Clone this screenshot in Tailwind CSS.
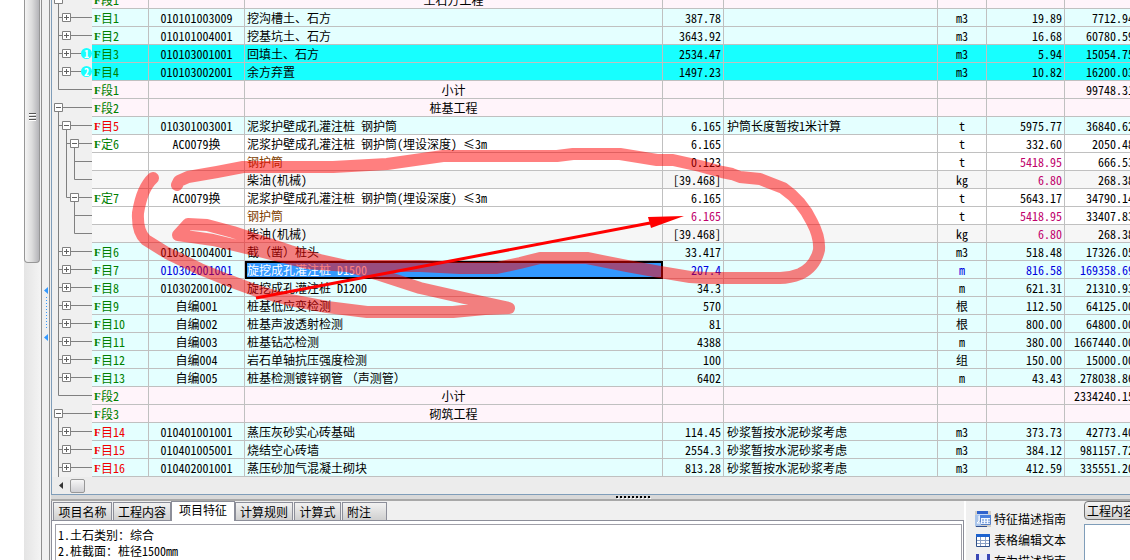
<!DOCTYPE html>
<html lang="zh-CN">
<head>
<meta charset="utf-8">
<title>工程量清单</title>
<script src="https://cdn.jsdelivr.net/npm/@tailwindcss/browser@4"></script>
</head>
<body class="relative flex h-screen overflow-hidden bg-[#f0f0f0] font-['Noto_Sans_CJK_SC',sans-serif] text-xs text-black [font-feature-settings:'hwid']">

<!-- page behind, with its vertical scroll bar -->
<div class="w-6 shrink-0 bg-white"></div>
<div class="w-[17px] shrink-0 bg-linear-to-r from-[#e4e4e4] to-[#f4f4f4]">
  <div class="flex h-[263px] w-4 items-center justify-center rounded-b-sm border border-t-0 border-[#979797] bg-linear-to-r from-[#f4f4f4] via-[#dcdcdc] to-[#b4b4b8]">
    <svg class="mt-[-28px] h-[9px] w-[7px]" viewBox="0 0 7 9"><path d="M0 .5H7M0 3.5H7M0 6.5H7" stroke="#555"/><path d="M0 1.5H7M0 4.5H7M0 7.5H7" stroke="#fff"/></svg>
  </div>
</div>
<!-- vertical splitter -->
<div class="flex w-[9px] shrink-0 items-center justify-center border-x border-[#8f8f8f] bg-[#f0f0f0]">
  <svg class="mt-[68px] h-[54px] w-1" viewBox="0 0 4 54"><path d="M4 0V7L0 3.5ZM4 47V54L0 50.5Z" fill="#3399ff"/><path d="M2.5 10V42" stroke="#3399ff" stroke-dasharray="1 2"/></svg>
</div>

<main class="ml-px flex min-w-0 flex-1 flex-col">
  <section class="flex min-h-0 flex-1 flex-col overflow-hidden border-b border-l border-[#7f9db9]">
    <div class="min-h-0 flex-1 overflow-hidden">
      <table class="mt-[-9px] w-[1086px] table-fixed border-separate border-spacing-0">
        <colgroup><col class="w-10"><col class="w-[57px]"><col class="w-24"><col class="w-[418px]"><col class="w-[61px]"><col class="w-[214px]"><col class="w-[49px]"><col class="w-[78px]"><col class="w-[73px]"></colgroup>
        <tbody id="rows"></tbody>
      </table>
    </div>
    <div class="flex h-[17px] shrink-0 items-center bg-[#ececec]">
      <button aria-label="向左滚动" class="flex h-4 w-[18px] items-center justify-center"><svg class="h-[7px] w-1" viewBox="0 0 4 7"><path d="M4 0V7L0 3.5Z" fill="#333"/></svg></button>
      <div class="h-[14px] w-[15px] rounded-xs border border-[#979797] bg-linear-to-b from-[#f6f6f6] to-[#d0d0d4]"></div>
    </div>
  </section>

  <div class="flex h-[6px] shrink-0 justify-center border-b-2 border-[#a8a8a8] bg-[#d8d8d8] pl-[85px]">
    <svg class="mt-px h-[3px] w-[35px]" viewBox="0 0 35 3"><path d="M0 1H35" stroke="#000" stroke-width="2" stroke-dasharray="2 2"/><path d="M1 2.5H35" stroke="#fff" stroke-dasharray="2 2"/></svg>
  </div>

  <section class="flex h-[59px] shrink-0 overflow-hidden border-l border-[#8c8e99]">
    <div class="flex min-w-0 flex-1 flex-col">
      <div role="tablist" class="flex h-5 shrink-0 items-end gap-px border-b border-[#8c8e99] pl-px">
        <button role="tab" class="h-[18px] w-[59px] border border-b-0 border-[#8c8e99] bg-linear-to-b from-[#f2f2f2] to-[#cfcfcf] leading-[17px]">项目名称</button>
        <button role="tab" class="h-[18px] w-[58px] border border-b-0 border-[#8c8e99] bg-linear-to-b from-[#f2f2f2] to-[#cfcfcf] leading-[17px]">工程内容</button>
        <button role="tab" aria-selected="true" class="-mx-px -mb-px h-5 w-16 border border-b-0 border-[#8c8e99] bg-white pb-[3px] leading-4">项目特征</button>
        <button role="tab" class="h-[18px] w-[58px] border border-b-0 border-[#8c8e99] bg-linear-to-b from-[#f2f2f2] to-[#cfcfcf] leading-[17px]">计算规则</button>
        <button role="tab" class="h-[18px] w-[47px] border border-b-0 border-[#8c8e99] bg-linear-to-b from-[#f2f2f2] to-[#cfcfcf] leading-[17px]">计算式</button>
        <button role="tab" class="h-[18px] w-[45px] border border-b-0 border-[#8c8e99] bg-linear-to-b from-[#f2f2f2] to-[#cfcfcf] pl-1 text-left leading-[17px]">附注</button>
      </div>
      <div class="flex flex-1 border-r border-[#8c8e99] bg-white pt-[3px] pr-px pl-[3px]">
        <textarea aria-label="项目特征" class="h-20 w-full resize-none overflow-hidden border border-[#a0a0a8] bg-white px-[2px] pt-[2px] leading-4 outline-none">1.土石类别：综合
2.桩截面：桩径1500mm</textarea>
      </div>
    </div>
    <div class="flex w-[120px] shrink-0 flex-col gap-[5px] border-l-2 border-white pt-[10px] pl-[9px]">
      <button class="flex h-4 items-center gap-[3px]"><svg class="h-4 w-4" viewBox="0 0 16 16"><path d="M0 0H16V16H0Z" fill="#d4d0c8"/><path d="M2 1H13V9H2Z" fill="#c4d8f6"/><path d="M2 0H13V3H2Z" fill="#2f62cc"/><path d="M5.500 4.500H15.500V13.500H5.500Z" fill="#f4f8ff" stroke="#5b83c8"/><path d="M5 4H16V7H5Z" fill="#4a80de"/><path d="M7 9H9M10 9H12M13 9H15M7 11.500H9M10 11.500H12M13 11.500H15" stroke="#86a9e0" stroke-width="1.500"/><path d="M0 4H4V9L6 12V15H0Z" fill="#a9c4ea"/><path d="M4 5V10L2 12H5" stroke="#fff" fill="none"/><path d="M1 15.500H12" stroke="#31508f"/></svg>特征描述指南</button>
      <button class="flex h-4 items-center gap-[3px]"><svg class="h-4 w-4" viewBox="0 0 16 16"><path d="M1.500 2.500H14.500V14.500H1.500Z" fill="#fff" stroke="#2d4e88"/><path d="M1 2H15V5H1Z" fill="#1d62cf"/><path d="M5.500 5V14M10.500 5V14M2 8.500H14M2 11.500H14" stroke="#8aa0c4"/></svg>表格编辑文本</button>
      <button class="flex h-4 items-center gap-[3px]"><svg class="h-4 w-4" viewBox="0 0 16 16"><path d="M1 1H15V15H1Z" fill="#3947b5"/><path d="M4 1H12V7H4Z" fill="#e8ecfa"/></svg>存为描述指南</button>
    </div>
    <div class="flex w-[46px] shrink-0 flex-col overflow-hidden">
      <button class="h-[19px] w-16 shrink-0 rounded-sm border border-[#707070] bg-linear-to-b from-[#f4f4f4] to-[#d4d4d4] pl-[2px] text-left leading-[17px]">工程内容</button>
      <div class="mt-1 w-20 flex-1 border border-b-0 border-[#7f9db9] bg-white"></div>
    </div>
  </section>
</main>

<!-- hand-drawn mark-up over the grid -->
<svg class="pointer-events-none absolute top-0 left-0 h-[560px] w-[1130px]" viewBox="0 0 1130 560" fill="none">
  <path opacity=".5" stroke="#f00" stroke-width="12" stroke-linecap="round" stroke-linejoin="round" d="M177 185L179 181L188 177L217 172L243 167L333 167L387 164L443 156L557 156L573 154L620 154L657 160L673 160L700 166L722 172L732 174L740 177L760 179L783 188Q802 201 812 222Q820 237 819 250Q815 267 800 274Q790 278 780 278L707 278L690 277L660 272L627 266L587 258L540 258L520 263L497 268H460L420 266H347L320 260L290 251L263 242L233 232L207 225L188 224L178 235L213 240L263 252L307 263L347 266L380 275L420 288L473 300L509 308L485 309L453 312H367L327 307L290 300L260 292L230 281L200 269L167 253L146 240Q137 232 138 213Q142 188 153 178"/>
  <path stroke="#f00" stroke-width="3" d="M256 298L650 223"/>
  <path fill="#f00" d="M648 217L684 216L651 228Z"/>
</svg>

<script>
// One 40x18 drawing of connector lines for each kind of row; box = left edge of the toggle.
const tree = {
  group:  ['M11 8.5H40M6.500 13V18', 2, '−'],
  end:    ['M6.500 0V8.500H40'],
  item:   ['M6.500 0V18M7 8.500H10M19 8.500H40', 10, '+'],
  open:   ['M6.500 0V18M7 8.500H10M19 8.500H40M14.500 13V18', 10, '−'],
  quota:  ['M6.500 0V18M14.500 0V18M15 8.500H18M27 8.500H40M22.500 13V18', 18, '−'],
  quotaZ: ['M6.500 0V18M14.500 0V8.500H18M27 8.500H40M22.500 13V18', 18, '−'],
  mat:    ['M6.500 0V18M14.500 0V18M22.500 0V18M23 8.500H40'],
  mach:   ['M6.500 0V18M14.500 0V18M22.500 0V8.500H40'],
  matZ:   ['M6.500 0V18M22.500 0V18M23 8.500H40'],
  machZ:  ['M6.500 0V18M22.500 0V8.500H40'],
};
const pad = { 2: 'pl-[2px]', 10: 'pl-[10px]', 18: 'pl-[18px]' };
const P = 'bg-[#fff4fa]', C = 'bg-[#e4ffff]', H = 'bg-[#17ffff]', W = 'bg-white', G = 'bg-[#f6f6f6]';
const data = [
  ['group', P, '段1', '', '土石方工程', '', '', '', '', ''],
  ['item', C, '目1', '010101003009', '挖沟槽土、石方', '387.78', '', 'm3', '19.89', '7712.94'],
  ['item', C, '目2', '010101004001', '挖基坑土、石方', '3643.92', '', 'm3', '16.68', '60780.59'],
  ['item', H, '目3', '010103001001', '回填土、石方', '2534.47', '', 'm3', '5.94', '15054.75', 1],
  ['item', H, '目4', '010103002001', '余方弃置', '1497.23', '', 'm3', '10.82', '16200.03', 2],
  ['end', P, '段1', '', '小计', '', '', '', '', '99748.31'],
  ['group', P, '段2', '', '桩基工程', '', '', '', '', ''],
  ['open', C, '目5', '010301003001', '泥浆护壁成孔灌注桩 钢护筒', '6.165', '护筒长度暂按1米计算', 't', '5975.77', '36840.62'],
  ['quota', W, '定6', 'AC0079换', '泥浆护壁成孔灌注桩 钢护筒(埋设深度) ≤3m', '6.165', '', 't', '332.60', '2050.48'],
  ['mat', W, '', '', '钢护筒', '0.123', '', 't', '5418.95', '666.53'],
  ['mach', G, '', '', '柴油(机械)', '[39.468]', '', 'kg', '6.80', '268.38'],
  ['quotaZ', W, '定7', 'AC0079换', '泥浆护壁成孔灌注桩 钢护筒(埋设深度) ≤3m', '6.165', '', 't', '5643.17', '34790.14'],
  ['matZ', W, '', '', '钢护筒', '6.165', '', 't', '5418.95', '33407.83'],
  ['machZ', G, '', '', '柴油(机械)', '[39.468]', '', 'kg', '6.80', '268.38'],
  ['item', C, '目6', '010301004001', '截（凿）桩头', '33.417', '', 'm3', '518.48', '17326.05'],
  ['item', C, '目7', '010302001001', '旋挖成孔灌注桩 D1500', '207.4', '', 'm', '816.58', '169358.69'],
  ['item', C, '目8', '010302001002', '旋挖成孔灌注桩 D1200', '34.3', '', 'm', '621.31', '21310.93'],
  ['item', C, '目9', '自编001', '桩基低应变检测', '570', '', '根', '112.50', '64125.00'],
  ['item', C, '目10', '自编002', '桩基声波透射检测', '81', '', '根', '800.00', '64800.00'],
  ['item', C, '目11', '自编003', '桩基钻芯检测', '4388', '', 'm', '380.00', '1667440.00'],
  ['item', C, '目12', '自编004', '岩石单轴抗压强度检测', '100', '', '组', '150.00', '15000.00'],
  ['item', C, '目13', '自编005', '桩基检测镀锌钢管 （声测管）', '6402', '', 'm', '43.43', '278038.86'],
  ['end', P, '段2', '', '小计', '', '', '', '', '2334240.15'],
  ['group', P, '段3', '', '砌筑工程', '', '', '', '', ''],
  ['item', C, '目14', '010401001001', '蒸压灰砂实心砖基础', '114.45', '砂浆暂按水泥砂浆考虑', 'm3', '373.73', '42773.40'],
  ['item', C, '目15', '010401005001', '烧结空心砖墙', '2554.3', '砂浆暂按水泥砂浆考虑', 'm3', '384.12', '981157.72'],
  ['item', C, '目16', '010402001001', '蒸压砂加气混凝土砌块', '813.28', '砂浆暂按水泥砂浆考虑', 'm3', '412.59', '335551.20'],
];
const cell = 'h-[18px] overflow-hidden whitespace-nowrap border-r border-b border-[#c0c0c0] p-0';
const text = 'h-[17px] leading-[18px]';
document.getElementById('rows').innerHTML = data.map(([k, bg, id, code, name, qty, note, unit, price, total, mark]) => {
  const [lines, box, sign] = tree[k];
  const sel = id === '目7', part = k.startsWith('ma');
  const red = ['目5', '目14', '目15', '目16'].includes(id);
  const heading = k === 'group' || k === 'end';
  const wide = /（/.test(name) ? '[font-feature-settings:normal]' : '';
  const blue = sel ? 'text-[#0000e0]' : '';
  const rose = part ? 'text-[#c0006c]' : blue;
  const toggle = box === undefined ? '' : `<button aria-label="${sign === '+' ? '展开' : '收起'}" class="relative block h-[9px] w-[9px]"><svg class="h-[9px] w-[9px]" viewBox="0 0 9 9"><path d="M.5.5H8.500V8.500H.5Z" fill="#fff" stroke="#808080"/><path d="${sign === '+' ? 'M2 4.500H7M4.500 2V7' : 'M2 4.500H7'}" stroke="#606060"/></svg></button>`;
  const badge = mark ? `<span class="absolute top-[3px] left-[29px] h-[11px] w-[11px] rounded-full bg-[#17ffff] text-center text-[10px] leading-[11px] font-bold text-white">${mark}</span>` : '';
  return `<tr class="${bg}">
    <td class="h-[18px] bg-[#f0f0f0] p-0"><div class="relative h-[18px] pt-1 ${pad[box] || ''}"><svg class="absolute inset-0 h-[18px] w-10" viewBox="0 0 40 18" fill="none" stroke="#808080"><path d="${lines}"/></svg>${toggle}${badge}</div></td>
    <td class="${cell} ${red ? 'text-[#f00000]' : 'text-[#008000]'}"><div class="${text} flex pl-[2px]">${id ? `<span class="w-[7px] font-['Liberation_Serif',serif] text-[11px] font-bold">F</span><span>${id}</span>` : ''}</div></td>
    <td class="${cell} ${blue}"><div class="${text} text-center">${code}</div></td>
    ${sel ? `<td class="h-[18px] overflow-hidden border-2 border-black bg-[#3399ff] p-0 whitespace-nowrap text-white"><div class="h-[14px] leading-[14px]">${name}</div></td>`
      : `<td class="${cell} ${wide} ${k.startsWith('mat') ? 'text-[#804000]' : ''}"><div class="${text} ${heading ? 'text-center' : 'pl-[2px]'}">${name}</div></td>`}
    <td class="${cell} ${k === 'matZ' ? rose : blue}"><div class="${text} pr-[2px] text-right">${qty}</div></td>
    <td class="${cell}"><div class="${text} pl-[3px]">${note}</div></td>
    <td class="${cell} ${blue}"><div class="${text} text-center">${unit}</div></td>
    <td class="${cell} ${rose}"><div class="${text} pr-[2px] text-right">${price}</div></td>
    <td class="${cell} ${blue}"><div class="${text} pr-[3px] text-right">${total}</div></td></tr>`;
}).join('');
</script>
</body>
</html>
